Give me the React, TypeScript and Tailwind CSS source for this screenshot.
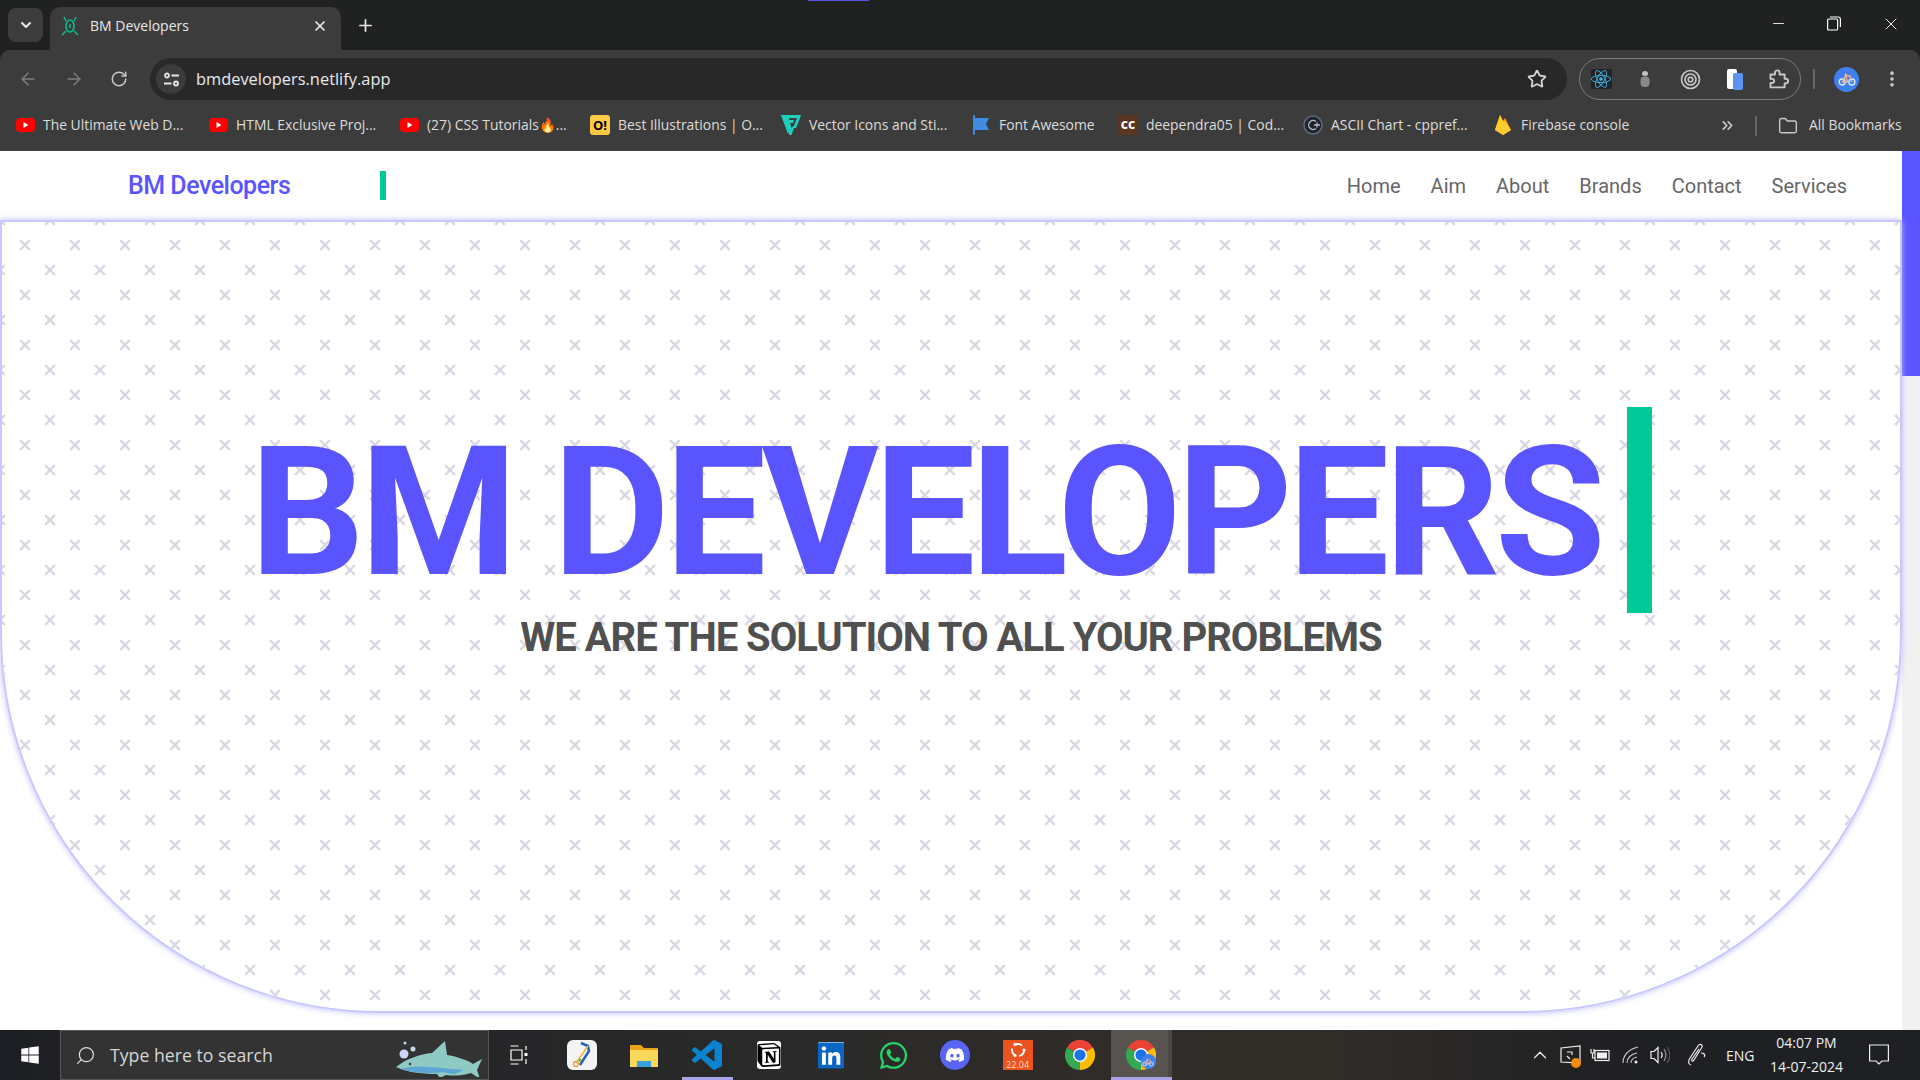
import React from 'react';
import { ArrowLeft, ArrowRight, RotateCw, Star, ChevronDown, Plus, X, Minus, EllipsisVertical, ChevronsRight, Folder, Search, ChevronUp } from 'lucide-react';
import { FaWindows, FaLinkedin, FaWhatsapp, FaDiscord, FaReact } from 'react-icons/fa';
import { SiNotion } from 'react-icons/si';

const Youtube = () => (
  <svg width="19" height="14" viewBox="0 0 19 14">
    <rect width="19" height="14" rx="4" fill="#ff0000" />
    <path d="M7.5 4v6l5-3z" fill="#fff" />
  </svg>
);

const ChromeLogo = ({ size = 30 }: { size?: number }) => (
  <svg width={size} height={size} viewBox="0 0 24 24">
    <path d="M12 12L1.6 6A12 12 0 0 1 22.4 6Z" fill="#ea4335" />
    <path d="M12 12L22.4 6A12 12 0 0 1 12 24Z" fill="#fbbc04" />
    <path d="M12 12L12 24A12 12 0 0 1 1.6 6Z" fill="#34a853" />
    <circle cx="12" cy="12" r="5.6" fill="#fff" />
    <circle cx="12" cy="12" r="4.5" fill="#1a73e8" />
  </svg>
);

const Bike = ({ size = 16 }: { size?: number }) => (
  <svg width={size} height={size} viewBox="0 0 24 24" fill="none" stroke="#fff" strokeWidth="1.8">
    <circle cx="5.5" cy="16" r="4" stroke="#dfe9f8" />
    <circle cx="18.5" cy="16" r="4" stroke="#dfe9f8" />
    <path d="M5.5 16L10 8h6l2.5 8M10 8l3 8h-7.5M9 6h3" stroke="#f4b28c" />
  </svg>
);

const bookmarks = [
  { w: 'w-[193px]', label: 'The Ultimate Web D...', icon: <Youtube /> },
  { w: 'w-[191px]', label: 'HTML Exclusive Proj...', icon: <Youtube /> },
  { w: 'w-[191px]', label: '(27) CSS Tutorials🔥...', icon: <Youtube /> },
  {
    w: 'w-[191px]',
    label: 'Best Illustrations | O...',
    icon: <span className="w-5 h-5 rounded-[3px] bg-[#ffc945] text-black text-[13px] font-bold leading-5 text-center">O!</span>,
  },
  {
    w: 'w-[190px]',
    label: 'Vector Icons and Sti...',
    icon: (
      <svg width="20" height="20" viewBox="0 0 20 20" fill="#1dd1bd">
        <path d="M0 0h20l-1 3-4 10h-3l4-10H8.5L8 5h5l-1 3H9l1.5 5 1.500-2 1 2-2.500 7h-2z" />
        <path d="M0 0l3 0 5 14-1 5z" />
      </svg>
    ),
  },
  {
    w: 'w-[147px]',
    label: 'Font Awesome',
    icon: (
      <svg width="16" height="20" viewBox="0 0 16 20" fill="#3f8ce0">
        <rect x="0" y="0" width="2" height="20" rx="1" />
        <path d="M2 3h14l-3 6 3 6H2z" />
      </svg>
    ),
  },
  {
    w: 'w-[185px]',
    label: 'deependra05 | Cod...',
    icon: <span className="w-5 h-5 bg-[#5a3520] text-white text-[14px] font-bold leading-[17px] text-center">cc</span>,
  },
  {
    w: 'w-[190px]',
    label: 'ASCII Chart - cppref...',
    icon: (
      <svg width="20" height="20" viewBox="0 0 20 20" fill="none">
        <circle cx="10" cy="10" r="9" fill="#20242c" stroke="#5b6a80" strokeWidth="1.5" />
        <path d="M13 6.500a4.500 4.500 0 1 0 0 7M11 10h6M14 7.500v5" stroke="#b5bcc8" strokeWidth="1.3" />
      </svg>
    ),
  },
  {
    w: 'w-[226px]',
    label: 'Firebase console',
    icon: (
      <svg width="16" height="20" viewBox="0 0 16 20">
        <path d="M0 15L5 0l3 6 2-3 6 12-8 5z" fill="#ffa000" />
        <path d="M0 15L5 0l5 10z" fill="#ffca28" />
        <path d="M0 15l10-9 6 9-8 5z" fill="#fcc934" />
      </svg>
    ),
  },
];

const apps = [
  <svg key="task" width="20" height="20" viewBox="0 0 20 20" fill="none" stroke="#fff" strokeWidth="1.200">
    <path d="M0.500 1h8M0.500 19h8M1 5h11v10H1zM16 1v4M16 14v5" />
    <rect x="14.500" y="8" width="3" height="3" fill="#fff" stroke="none" />
  </svg>,
  <svg key="ink" width="30" height="30" viewBox="0 0 30 30" fill="none">
    <rect width="30" height="30" rx="6" fill="#f4f4f4" />
    <path d="M14 3l7 3 1 5-9 14" stroke="#2a62b8" strokeWidth="2.500" />
    <path d="M21 6L9 23" stroke="#f2b632" strokeWidth="1.500" />
    <circle cx="9" cy="24" r="2.500" stroke="#e3a62a" strokeWidth="1.300" />
    <circle cx="13" cy="20" r="1.500" fill="#5cb531" />
  </svg>,
  <svg key="files" width="30" height="30" viewBox="0 0 30 30">
    <path d="M1 5h11l3 3h14v18H1z" fill="#e8a317" />
    <rect x="1" y="10" width="28" height="17" fill="#fbd75b" />
    <rect x="8" y="21" width="14" height="6" fill="#3aa0dc" />
  </svg>,
  <svg key="code" width="30" height="30" viewBox="0 0 24 24" fill="#0a84d0">
    <path d="M23.150 2.587L18.210.21a1.494 1.494 0 0 0-1.705.29l-9.460 8.630-4.120-3.128a.999.999 0 0 0-1.276.057L.327 7.261A1 1 0 0 0 .326 8.740L3.899 12 .326 15.260a1 1 0 0 0 .001 1.479L1.650 17.940a.999.999 0 0 0 1.276.057l4.120-3.128 9.460 8.630a1.492 1.492 0 0 0 1.704.29l4.942-2.377A1.500 1.500 0 0 0 24 20.060V3.939a1.500 1.500 0 0 0-.85-1.352zm-5.146 14.861L10.826 12l7.178-5.448v10.896z" />
  </svg>,
  <span key="notion" className="w-6 h-7 bg-white rounded-[3px] flex items-center justify-center">
    <SiNotion className="text-black" size={26} />
  </span>,
  <span key="in" className="w-[26px] h-[26px] bg-white flex items-center justify-center rounded-[2px]">
    <FaLinkedin className="text-[#0a66c2]" size={31} />
  </span>,
  <FaWhatsapp key="wa" className="text-[#25d366]" size={31} />,
  <span key="dc" className="w-[30px] h-[30px] rounded-full bg-[#5865f2] flex items-center justify-center">
    <FaDiscord className="text-white" size={20} />
  </span>,
  <span key="ub" className="w-[30px] h-[30px] bg-[#e95420] flex flex-col items-center justify-between overflow-hidden">
    <svg width="20" height="20" viewBox="0 0 20 20" fill="none" stroke="#fff" strokeWidth="1.800">
      <circle cx="10" cy="10" r="6" strokeDasharray="8 4" />
      <circle cx="16" cy="10" r="1.600" fill="#fff" stroke="none" />
      <circle cx="7" cy="4.500" r="1.600" fill="#fff" stroke="none" />
      <circle cx="7" cy="15.500" r="1.600" fill="#fff" stroke="none" />
    </svg>
    <span className="text-[9px] leading-[10px] text-[#ffd9c9]">22.04</span>
  </span>,
  <ChromeLogo key="chrome" />,
];

const Chrome = () => (
  <header className="relative shrink-0 bg-[#202222] font-['Open_Sans',sans-serif]">
    <div className="absolute top-0 left-[808px] w-[61px] h-px bg-[#5a54e0]" />

    {/* tab strip */}
    <div className="h-[50px] flex items-end text-[#e8e8e8]">
      <div className="ml-2 mb-2 w-[35px] h-[34px] rounded-lg bg-[#3c3c3c] flex items-center justify-center">
        <ChevronDown size={16} strokeWidth={3} />
      </div>
      <div className="ml-[7px] w-[291px] h-[43px] rounded-t-[10px] bg-[#3c3c3c] flex items-center pb-[6px] pl-[11px] pr-[13px]">
        <svg width="18" height="20" viewBox="0 0 18 20" fill="none" stroke="#10b88e" strokeWidth="1.600">
          <ellipse cx="9" cy="10" rx="4" ry="6" />
          <path d="M3 1l2 4M15 1l-2 4M1 19l4-4M17 19l-4-4M9 8v4" />
        </svg>
        <span className="ml-[11px] flex-1 text-[14px]">BM Developers</span>
        <X size={16} strokeWidth={2.600} />
      </div>
      <div className="ml-[15px] h-[43px] flex items-center pb-[6px]">
        <Plus size={19} strokeWidth={2.200} />
      </div>
      <div className="ml-auto h-full flex items-center pb-[3px] text-white">
        <div className="w-[56px] flex justify-center"><Minus size={17} strokeWidth={1.200} /></div>
        <div className="w-[56px] flex justify-center">
          <svg width="14" height="15" viewBox="0 0 14 15" fill="none" stroke="#fff" strokeWidth="1.200">
            <rect x="0.600" y="3" width="10" height="11" rx="1" />
            <path d="M3 1h8.500a2 2 0 0 1 1.900 2v8" />
          </svg>
        </div>
        <div className="w-[58px] flex justify-center"><X size={20} strokeWidth={1.100} /></div>
      </div>
    </div>

    <div className="bg-[#3c3c3c] rounded-t-[10px]">
      {/* toolbar */}
      <div className="h-[50px] pt-2 flex items-center text-[#c8c8c8]">
        <div className="w-[46px] ml-[5px] flex justify-center text-[#7d7d7d]"><ArrowLeft size={20} strokeWidth={1.800} /></div>
        <div className="w-[46px] flex justify-center text-[#7d7d7d]"><ArrowRight size={20} strokeWidth={1.800} /></div>
        <div className="w-[44px] flex justify-center"><RotateCw size={18} strokeWidth={2} /></div>
        <div className="ml-[9px] w-[1417px] h-[42px] rounded-full bg-[#282828] flex items-center pl-[6px] pr-5">
          <span className="w-[30px] h-[30px] rounded-full bg-[#3c3c3c] flex items-center justify-center">
            <svg width="17" height="15" viewBox="0 0 17 15" fill="none" stroke="#e6e6e6" strokeWidth="1.800">
              <circle cx="4" cy="3.500" r="2" />
              <path d="M8.500 3.500H16M1 11.500h7.500" />
              <circle cx="13" cy="11.500" r="2" />
            </svg>
          </span>
          <span className="ml-[10px] flex-1 text-[16.400px] text-[#e8eaed]">bmdevelopers.netlify.app</span>
          <Star size={20} strokeWidth={2.200} className="text-[#d4d4d4]" />
        </div>
        <div className="ml-3 w-[222px] h-[42px] rounded-full border border-[#7a7a7a] flex items-center">
          <div className="w-[42px] flex justify-center">
            <span className="w-[21px] h-5 bg-[#20232a] rounded-[2px] flex items-center justify-center">
              <FaReact className="text-[#45b6e0]" size={20} />
            </span>
          </div>
          <div className="w-[45px] flex justify-center">
            <svg width="12" height="18" viewBox="0 0 12 18" fill="#8a8a8a">
              <ellipse cx="6" cy="3.500" rx="3" ry="2.500" fill="#c2c2c2" />
              <rect x="1.500" y="6.500" width="9" height="10.500" rx="4" />
            </svg>
          </div>
          <div className="w-[46px] flex justify-center">
            <svg width="21" height="21" viewBox="0 0 21 21" fill="none" stroke="#c8c8c8" strokeWidth="1.600">
              <circle cx="10.500" cy="10.500" r="9" />
              <circle cx="10.500" cy="10.500" r="5.500" />
              <circle cx="10.500" cy="10.500" r="2.300" />
            </svg>
          </div>
          <div className="w-[45px] flex justify-center">
            <svg width="17" height="21" viewBox="0 0 17 21">
              <rect x="0" y="0" width="10" height="20" rx="2" fill="#fff" />
              <rect x="6" y="4" width="10" height="17" rx="2" fill="#5a94f0" />
            </svg>
          </div>
          <div className="w-[42px] flex justify-center">
            <svg width="20" height="20" viewBox="0 0 20 20" fill="none" stroke="#c8c8c8" strokeWidth="1.900" strokeLinejoin="round">
              <path d="M1.500 5.500H6V3.700a2.300 2.300 0 0 1 4.600 0v1.800h5v4.300h1.200a2.300 2.300 0 0 1 0 4.600h-1.200v4H1.500v-4.500h1.600a2 2 0 0 0 0-4H1.500z" />
            </svg>
          </div>
        </div>
        <div className="ml-[12px] w-[2px] h-[20px] bg-[#666]" />
        <div className="ml-[19px] w-[25px] h-[25px] rounded-full bg-[#3f80f0] flex items-center justify-center"><Bike size={18} /></div>
        <div className="ml-[23px] flex"><EllipsisVertical size={20} strokeWidth={2.400} /></div>
      </div>

      {/* bookmarks */}
      <div className="h-[51px] pl-[15px] flex items-center text-[13.900px] text-[#dcdcdc]">
        {bookmarks.map((b) => (
          <div key={b.label} className={`${b.w} shrink-0 flex items-center`}>
            <span className="w-5 flex justify-center">{b.icon}</span>
            <span className="ml-2 whitespace-nowrap">{b.label}</span>
          </div>
        ))}
        <ChevronsRight size={17} strokeWidth={2.400} className="text-[#c8c8c8]" />
        <div className="ml-[19px] w-[2px] h-5 bg-[#666]" />
        <Folder size={20} strokeWidth={1.700} className="ml-[21px] text-[#c8c8c8]" />
        <span className="ml-[11px] whitespace-nowrap">All Bookmarks</span>
      </div>
    </div>
  </header>
);

const navLinks = ['Home', 'Aim', 'About', 'Brands', 'Contact', 'Services'];

const Taskbar = () => (
  <footer className="shrink-0 h-[50px] flex items-stretch text-white bg-[linear-gradient(90deg,#1d1f24_0%,#2a2a2a_40%,#322d28_68%,#1f2024_85%)] font-['Open_Sans',sans-serif]">
    <div className="w-[60px] flex items-center justify-center"><FaWindows size={20} /></div>
    <div className="w-[429px] bg-[#333333] border border-[#565656] flex items-center relative">
      <Search size={21} strokeWidth={1.400} className="ml-[14px] -scale-x-100 text-[#e0e0e0]" />
      <span className="ml-[14px] text-[17.700px] text-[#d6d6d6]">Type here to search</span>
      <svg className="absolute right-[4px] top-[4px]" width="88" height="42" viewBox="0 0 88 42">
        <circle cx="8" cy="19" r="4.500" fill="#cfd4f8" />
        <circle cx="17" cy="14" r="2.500" fill="#c5d8ee" />
        <circle cx="9" cy="8" r="1.500" fill="#c5d8ee" />
        <path d="M0 32c10-8 24-13 36-14L49 6l2 14c12 2 22 6 26 9l9-5-5 11 3 9-9-6c-10 3-18 3-25 2l-6 3-3-4c-16 0-30-2-41-7z" fill="#8fc9c4" />
        <path d="M4 34c14 4 30 5 42 3l12 2 10-4c-20-1-44-6-64-1z" fill="#5ba6d4" />
        <circle cx="14" cy="29" r="1.200" fill="#4a2a30" />
      </svg>
    </div>
    {apps.map((icon, i) => (
      <div key={i} className="relative w-[62.200px] flex items-center justify-center">
        {icon}
        {i === 3 && <span className="absolute bottom-0 left-[6px] right-[5px] h-[3px] bg-[#a9a3e8]" />}
      </div>
    ))}
    <div className="w-[57px] flex items-center justify-center bg-[#57534e] border-b-[3px] border-[#a9a3e8] pt-[3px] pl-1 relative">
      <ChromeLogo />
      <span className="absolute left-[30px] top-[24px] w-[15px] h-[15px] rounded-full bg-[#3f80f0] flex items-center justify-center"><Bike size={12} /></span>
    </div>
    <div className="w-1 bg-[#4a4640] border-b-[3px] border-[#a9a3e8]" />

    {/* tray */}
    <div className="ml-auto flex items-center text-[#f0f0f0]">
      <ChevronUp size={22} strokeWidth={1.300} />
      <span className="relative ml-[9px]">
        <svg width="21" height="20" viewBox="0 0 21 20" fill="none" stroke="#f0f0f0" strokeWidth="1.200">
          <path d="M1 3l19-2v17l-19-1zM7 7h5v3M7 11l3 3" />
        </svg>
        <span className="absolute right-0 bottom-[-3px] w-[10px] h-[10px] rounded-full bg-[#f28c0a]" />
      </span>
      <svg className="ml-[9px]" width="20" height="14" viewBox="0 0 20 14" fill="none" stroke="#f0f0f0" strokeWidth="1.200">
        <rect x="5" y="2.500" width="14" height="10" />
        <rect x="7" y="4.500" width="10" height="6" fill="#f0f0f0" stroke="none" />
        <path d="M1 1v4h3V1M2.500 5v5h3" />
      </svg>
      <svg className="ml-[12px]" width="18" height="18" viewBox="0 0 18 18" fill="none" stroke="#c8c8c8" strokeWidth="1.100">
        <path d="M1 17C1 9 7 3 16 1M5 17c0-5 4-9 10-10M9 17c0-3 2-5 6-6" />
        <circle cx="14" cy="16" r="1.500" fill="#f0f0f0" stroke="none" />
      </svg>
      <svg className="ml-[10px]" width="20" height="20" viewBox="0 0 20 20" fill="none" stroke="#f0f0f0" strokeWidth="1.200">
        <path d="M1 6.500h3l4-4v15l-4-4H1zM11 7c1.500 2 1.500 4 0 6" />
        <path d="M14 4c2.500 4 2.500 8 0 12" stroke="#9a9a9a" />
        <path d="M17 2c3.500 5 3.500 11 0 16" stroke="#555" />
      </svg>
      <svg className="ml-[17px]" width="20" height="24" viewBox="0 0 20 24" fill="none" stroke="#f0f0f0" strokeWidth="1.200">
        <path d="M4 22c-3-1-3-4-1-7l8-12c2-3 5-1 4 1l-8 13c-1 2-3 1-2-1l7-10M14 10c3 0 5 2 3 4" />
      </svg>
      <span className="ml-[19px] w-[27px] text-[14px]">ENG</span>
      <div className="ml-[16px] w-[75px] flex flex-col items-center text-[14px] leading-[24px]">
        <span>04:07 PM</span>
        <span className="whitespace-nowrap">14-07-2024</span>
      </div>
      <svg className="ml-[25px] mr-[31px]" width="20" height="22" viewBox="0 0 20 22" fill="none" stroke="#f0f0f0" strokeWidth="1.200">
        <path d="M0.600 1h18.800v16H13l-3 3-3-3H0.600z" />
      </svg>
    </div>
  </footer>
);

const App: React.FC = () => {
  return (
    <div className="h-screen w-full flex flex-col overflow-hidden bg-white">
      <Chrome />

      <div className="flex-1 min-h-0 flex font-['Roboto',sans-serif]">
        <main className="flex-1 min-w-0">
          {/* nav */}
          <nav className="h-[69px] pl-[128px] pr-[55px] flex items-center bg-white">
            <span className="pt-px text-[25px] font-medium tracking-[-0.5px] text-[#5a54ff]">BM Developers</span>
            <span className="ml-[90px] w-[6px] h-[29px] bg-[#00c896]" />
            <ul className="ml-auto flex gap-[30px] text-[20px] text-[#666666]">
              {navLinks.map((l) => (
                <li key={l}>{l}</li>
              ))}
            </ul>
          </nav>

          {/* hero */}
          <section className="relative h-[793px] overflow-hidden rounded-b-[380px] border-2 border-[#c9c7ff] shadow-[0_0_6px_#bcb9ff]">
            <svg className="absolute inset-0 w-full h-full" aria-hidden="true">
              <defs>
                <pattern id="crosses" x="-2" y="-2" width="50" height="50" patternUnits="userSpaceOnUse">
                  <g stroke="#d9d7e3" strokeWidth="2.400" fill="none">
                    <path d="M20.200 20.200l9.600 9.600M29.800 20.200l-9.600 9.600" />
                    <path d="M-4.800 -4.800l9.600 9.600M4.800 -4.800l-9.600 9.600" />
                    <path d="M45.200 -4.800l9.600 9.600M54.800 -4.800l-9.600 9.600" />
                    <path d="M-4.800 45.200l9.600 9.600M4.800 45.200l-9.600 9.600" />
                    <path d="M45.200 45.200l9.600 9.600M54.800 45.200l-9.600 9.600" />
                  </g>
                </pattern>
              </defs>
              <rect width="100%" height="100%" fill="url(#crosses)" />
            </svg>
            <div className="relative flex flex-col items-center pt-[185px]">
              <div className="flex items-center">
                <h1 className="pt-[5px] text-[180px] leading-[201px] font-bold tracking-[-4.800px] text-[#5a54ff] whitespace-nowrap">BM DEVELOPERS</h1>
                <span className="ml-[26px] w-[25px] h-[206px] bg-[#00c896]" />
              </div>
              <h2 className="mt-px text-[40px] leading-[48px] font-bold tracking-[-1px] text-[#505050] whitespace-nowrap">WE ARE THE SOLUTION TO ALL YOUR PROBLEMS</h2>
            </div>
          </section>
        </main>

        {/* scrollbar */}
        <div className="w-[18px] bg-[#f1f1f1] shrink-0">
          <div className="h-[225px] bg-[#5a54ff]" />
        </div>
      </div>

      <Taskbar />
    </div>
  );
};

export default App;
